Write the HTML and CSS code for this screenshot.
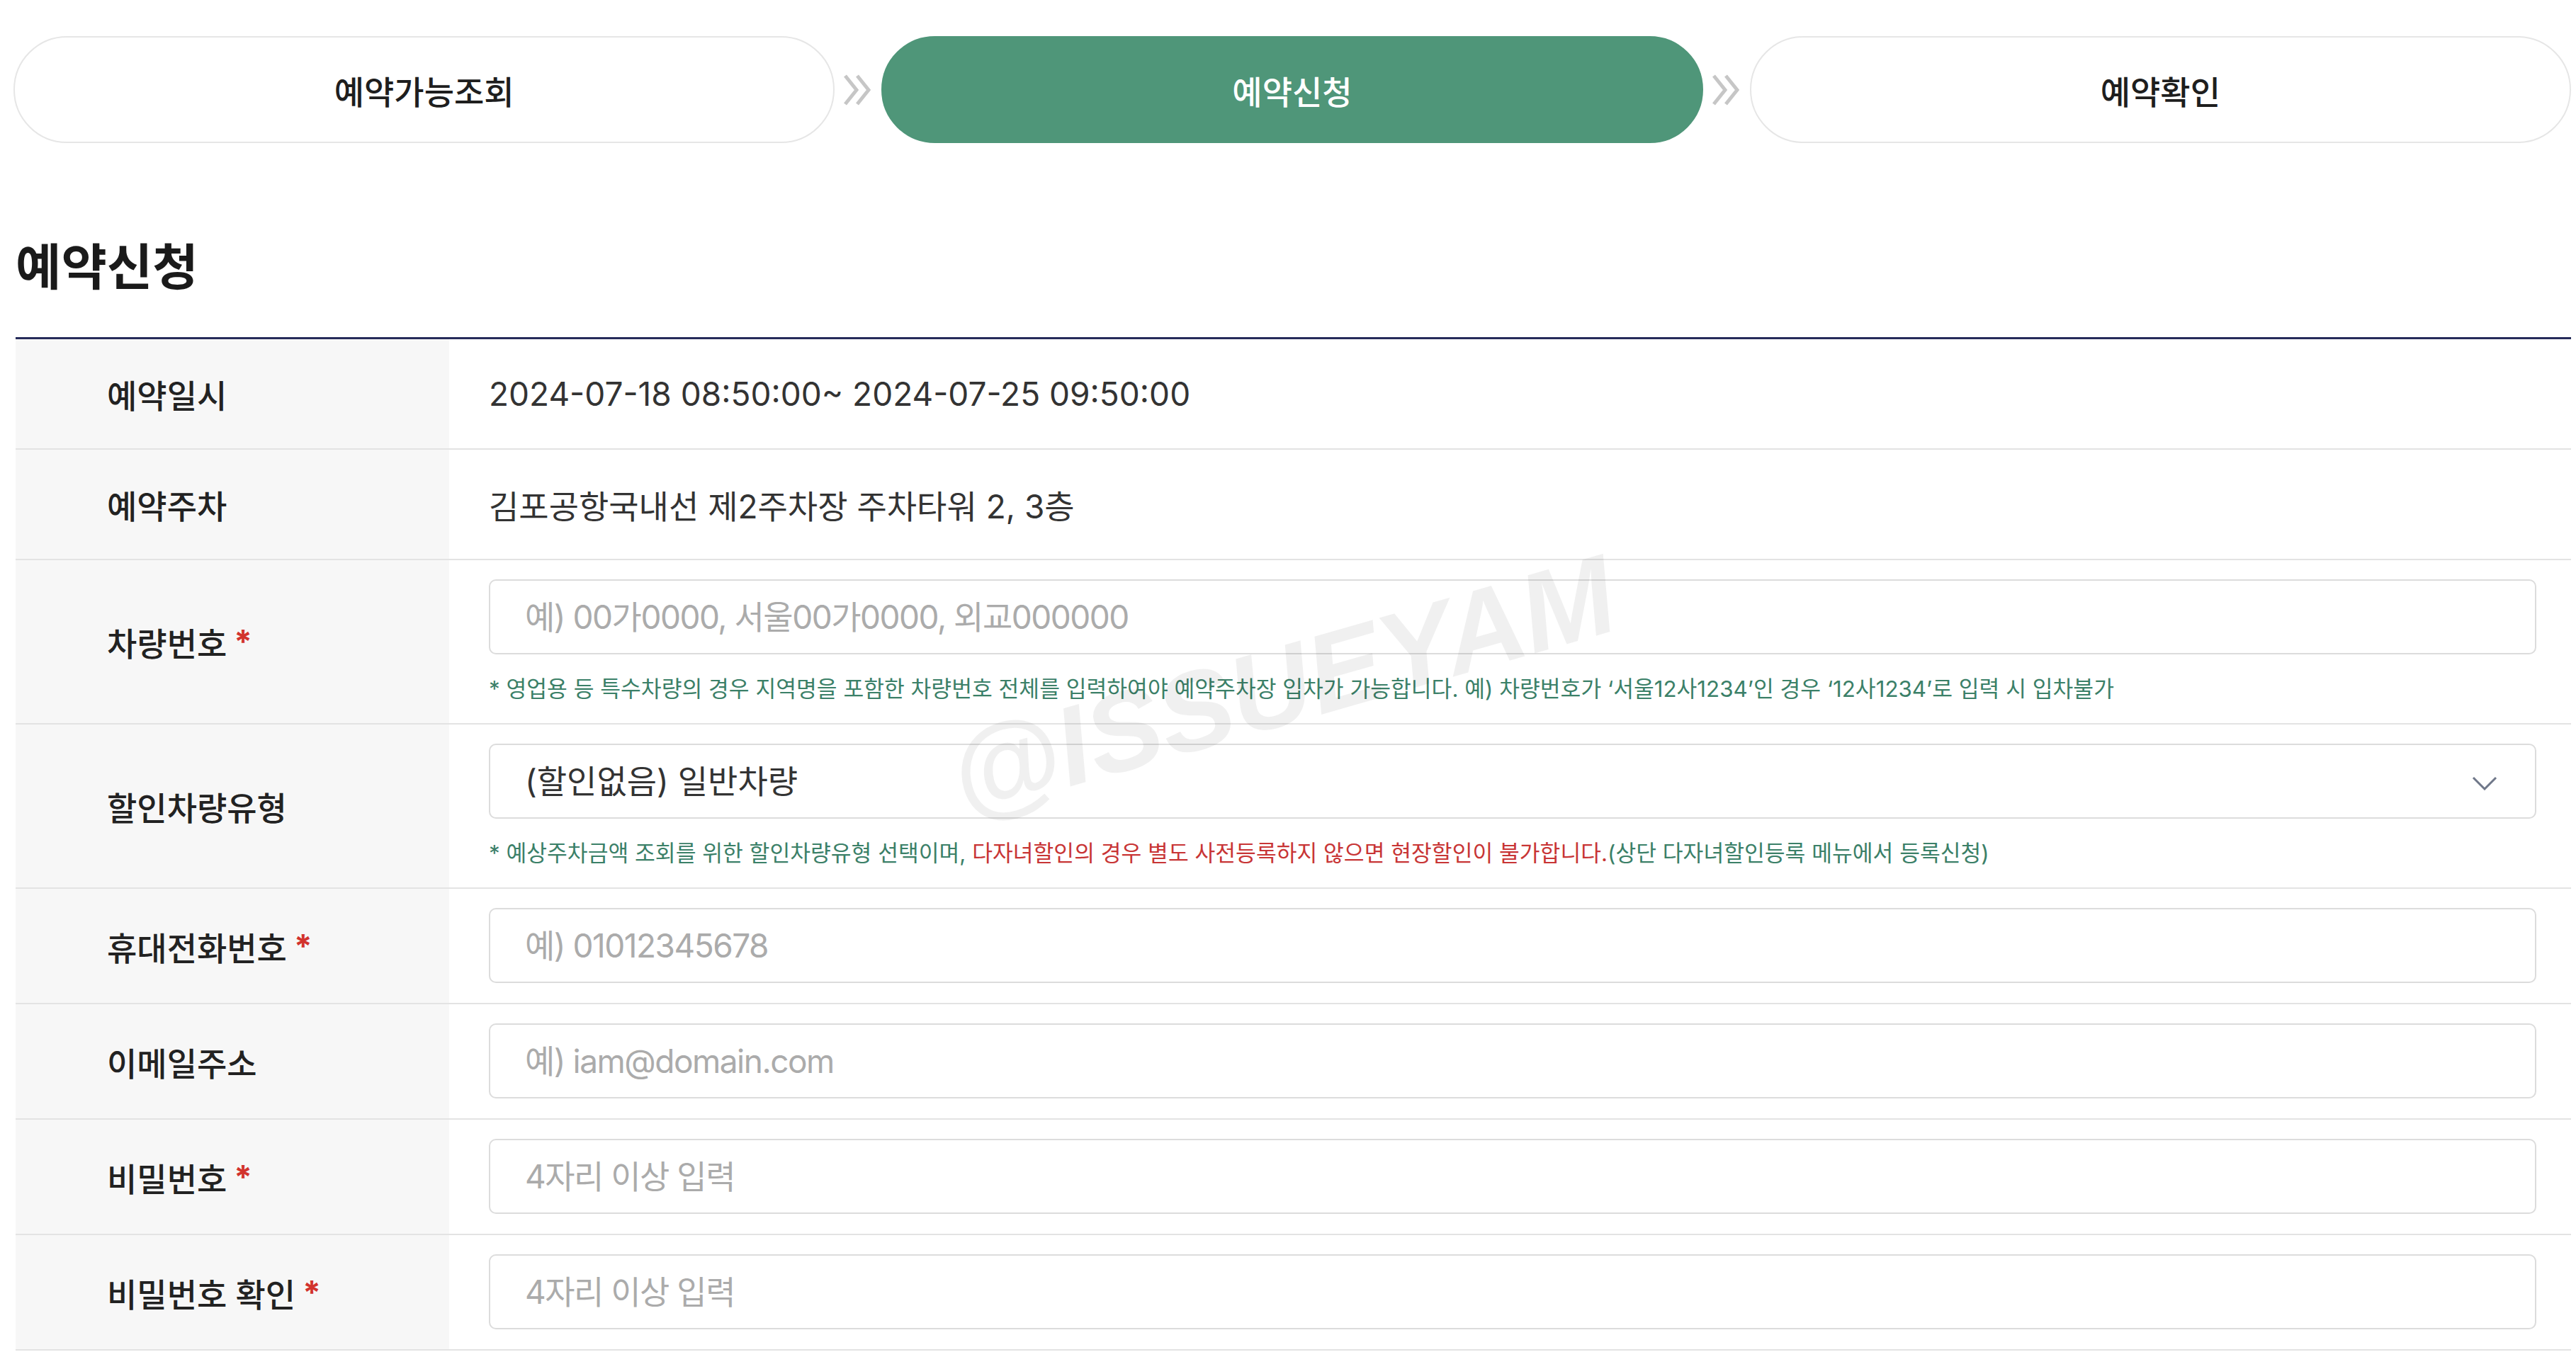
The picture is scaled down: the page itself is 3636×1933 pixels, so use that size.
FILE: index.html
```html
<!DOCTYPE html>
<html lang="ko">
<head>
<meta charset="utf-8">
<title>예약신청</title>
<link rel="stylesheet" href="styles.css">
</head>
<body>
<div class="page">
  <nav class="steps">
    <div class="step">예약가능조회</div>
    <svg class="step-arrow" viewBox="0 0 44 48" width="44" height="48" aria-hidden="true">
      <polyline points="4,4 20,24 4,44" fill="none" stroke="#c6c6c6" stroke-width="5"/>
      <polyline points="21,4 37,24 21,44" fill="none" stroke="#c6c6c6" stroke-width="5"/>
    </svg>
    <div class="step active">예약신청</div>
    <svg class="step-arrow" viewBox="0 0 44 48" width="44" height="48" aria-hidden="true">
      <polyline points="4,4 20,24 4,44" fill="none" stroke="#c6c6c6" stroke-width="5"/>
      <polyline points="21,4 37,24 21,44" fill="none" stroke="#c6c6c6" stroke-width="5"/>
    </svg>
    <div class="step">예약확인</div>
  </nav>

  <h2 class="title">예약신청</h2>

  <div class="form">
    <div class="row plain">
      <div class="th">예약일시</div>
      <div class="td text">2024-07-18 08:50:00~ 2024-07-25 09:50:00</div>
    </div>
    <div class="row plain">
      <div class="th">예약주차</div>
      <div class="td text">김포공항국내선 제2주차장 주차타워 2, 3층</div>
    </div>
    <div class="row">
      <div class="th">차량번호<span class="req">*</span></div>
      <div class="td">
        <input class="field" type="text" placeholder="예) 00가0000, 서울00가0000, 외교000000">
        <p class="note">* 영업용 등 특수차량의 경우 지역명을 포함한 차량번호 전체를 입력하여야 예약주차장 입차가 가능합니다. 예) 차량번호가 ‘서울12사1234’인 경우 ‘12사1234’로 입력 시 입차불가</p>
      </div>
    </div>
    <div class="row">
      <div class="th">할인차량유형</div>
      <div class="td">
        <div class="select-wrap">
          <select class="field select">
            <option>(할인없음) 일반차량</option>
          </select>
          <svg class="chev" viewBox="0 0 36 20" width="36" height="20" aria-hidden="true">
            <polyline points="2,2 18,18 34,2" fill="none" stroke="#6f7789" stroke-width="3"/>
          </svg>
        </div>
        <p class="note">* 예상주차금액 조회를 위한 할인차량유형 선택이며, <span class="warn">다자녀할인의 경우 별도 사전등록하지 않으면 현장할인이 불가합니다.</span>(상단 다자녀할인등록 메뉴에서 등록신청)</p>
      </div>
    </div>
    <div class="row">
      <div class="th">휴대전화번호<span class="req">*</span></div>
      <div class="td"><input class="field" type="text" placeholder="예) 01012345678"></div>
    </div>
    <div class="row">
      <div class="th">이메일주소</div>
      <div class="td"><input class="field" type="text" placeholder="예) iam@domain.com"></div>
    </div>
    <div class="row">
      <div class="th">비밀번호<span class="req">*</span></div>
      <div class="td"><input class="field" type="password" placeholder="4자리 이상 입력"></div>
    </div>
    <div class="row">
      <div class="th">비밀번호 확인<span class="req">*</span></div>
      <div class="td"><input class="field" type="password" placeholder="4자리 이상 입력"></div>
    </div>
  </div>

  <div class="watermark">@ISSUEYAM</div>
</div>
</body>
</html>
```

FILE: styles.css
```css
* { box-sizing: border-box; }

html, body {
  margin: 0;
  padding: 0;
  background: #ffffff;
}

body {
  font-family: Inter, "Noto Sans CJK KR", sans-serif;
  color: #222222;
}

.page {
  position: relative;
  width: 3610px;
  margin-left: 19px;
  padding-top: 51px;
}

/* steps */
.steps {
  display: flex;
  align-items: center;
}

.step {
  flex: 1;
  height: 151px;
  border: 2px solid #e6e6e6;
  border-radius: 76px;
  display: flex;
  align-items: center;
  justify-content: center;
  font-size: 46px;
  font-weight: 500;
  color: #1e1e1e;
  background: #ffffff;
}

.step.active {
  background: #4f9679;
  border-color: #4f9679;
  color: #ffffff;
}

.step-arrow {
  flex: none;
  margin: 0 11px;
}

/* title */
.title {
  margin: 134px 0 0 3px;
  height: 84px;
  line-height: 84px;
  font-size: 70px;
  font-weight: 700;
  color: #1a1a1a;
}

/* form table */
.form {
  margin-top: 56px;
  margin-left: 3px;
  border-top: 3px solid #262b5a;
}

.row {
  display: grid;
  grid-template-columns: 612px 1fr;
  border-bottom: 2px solid #e3e3e3;
}

.th {
  background: #f7f7f7;
  display: flex;
  align-items: center;
  padding-left: 129px;
  font-size: 46px;
  font-weight: 500;
  color: #222222;
}

.req {
  color: #d2332d;
  margin-left: 10px;
  font-weight: 700;
}

.td {
  display: flex;
  flex-direction: column;
  justify-content: center;
  padding: 27px 49px 28px 56px;
  min-width: 0;
}

.row.plain .td {
  height: 154px;
  padding-top: 0;
  padding-bottom: 0;
}

.text {
  font-size: 46px;
  color: #333333;
}

.field {
  width: 100%;
  height: 106px;
  border: 2px solid #dcdcdc;
  border-radius: 10px;
  padding: 0 40px 0 49px;
  font-family: Inter, "Noto Sans CJK KR", sans-serif;
  font-size: 46px;
  color: #333333;
  background: #ffffff;
  outline: none;
}

.field::placeholder {
  color: #ababab;
  letter-spacing: -1.5px;
}

.select-wrap {
  position: relative;
}

.select {
  appearance: none;
  -webkit-appearance: none;
  color: #333333;
}

.chev {
  position: absolute;
  right: 55px;
  top: 46px;
  pointer-events: none;
}

.note {
  margin: 29px 0 0 0;
  line-height: 40px;
  font-size: 31.3px;
  color: #3b8068;
  white-space: nowrap;
}

.warn {
  color: #c83535;
}

/* watermark overlay */
.watermark {
  position: absolute;
  left: 1791px;
  top: 968px;
  transform: translate(-50%, -50%) rotate(-16deg);
  font-family: "Liberation Sans", sans-serif;
  font-size: 158px;
  font-weight: 700;
  font-style: italic;
  color: rgba(0, 0, 0, 0.06);
  white-space: nowrap;
  pointer-events: none;
}
```
